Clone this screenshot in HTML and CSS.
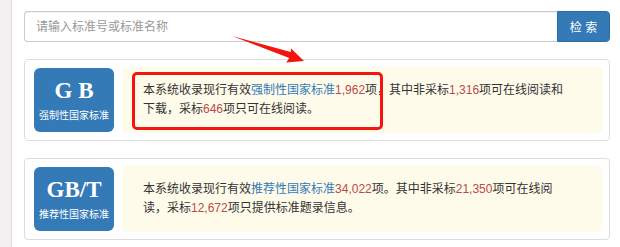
FILE: index.html
```html
<!DOCTYPE html>
<html lang="zh-CN">
<head>
  <meta charset="UTF-8" />
  <title>国家标准全文公开</title>
  <meta name="viewport" content="width=device-width, initial-scale=1.0" />
  <link rel="stylesheet" href="styles.css">
</head>
<body>
  <div class="page">
    <aside class="sidebar"></aside>

    <main class="main">
      <form class="search" onsubmit="return false">
        <input type="text" placeholder="请输入标准号或标准名称" />
        <button type="submit">检 索</button>
      </form>

      <div class="panel">
        <div class="badge">
          <span class="code">G B</span>
          <span class="label">强制性国家标准</span>
        </div>
        <div class="note">
          <p>本系统收录现行有效<span class="kind">强制性国家标准</span><span class="num">1,962</span>项，其中非采标<span class="num">1,316</span>项可在线阅读和<br>下载，采标<span class="num">646</span>项只可在线阅读。</p>
          <div class="mark"></div>
        </div>
      </div>

      <div class="panel">
        <div class="badge">
          <span class="code">GB/T</span>
          <span class="label">推荐性国家标准</span>
        </div>
        <div class="note">
          <p>本系统收录现行有效<span class="kind">推荐性国家标准</span><span class="num">34,022</span>项。其中非采标<span class="num">21,350</span>项可在线阅<br>读，采标<span class="num">12,672</span>项只提供标准题录信息。</p>
        </div>
      </div>
    </main>

    <!-- annotation arrow -->
    <svg class="arrow" width="620" height="247" viewBox="0 0 620 247">
      <polygon points="232,36 290.7,52.1 291.1,48.6 304,61 286.2,62.6 289.3,57.9" fill="#f5140e" />
    </svg>
  </div>
</body>
</html>
```

FILE: styles.css
```css
:root {
  --blue: #337ab7;
  --border: #ddd;
  --note-bg: #fffbea;
  --text: #333;
  --num: #b94a48;
}

body {
  margin: 0;
  font-family: "Liberation Sans", "Noto Sans CJK SC", sans-serif;
  font-size: 12px;
  color: var(--text);
  background: #fff;
}

.page {
  position: relative;
  display: flex;
  min-height: 247px;
}

.sidebar {
  width: 11px;
  flex-shrink: 0;
  background: #f2f1ef;
  border-right: 1px solid var(--border);
}

.main {
  flex: 1;
  padding: 11px 10px 0 12px;
}

.search {
  display: flex;
  height: 31px;
  margin: 0;
}

.search input {
  flex: 1;
  margin: 0;
  padding: 0 11px;
  font-family: inherit;
  font-size: 12px;
  color: var(--text);
  border: 1px solid #ccc;
  border-right: none;
  border-radius: 4px 0 0 4px;
  box-shadow: inset 0 1px 1px rgba(0, 0, 0, 0.06);
  outline: none;
}

.search input::placeholder {
  color: #999;
}

.search button {
  width: 53px;
  margin: 0;
  padding: 0;
  font-family: inherit;
  font-size: 12px;
  color: #fff;
  background: var(--blue);
  border: 1px solid #2e6da4;
  border-radius: 0 4px 4px 0;
  cursor: pointer;
}

.panel {
  display: flex;
  align-items: center;
  gap: 8px;
  margin-top: 17px;
  padding: 7px 7px 7px 8px;
  border: 1px solid var(--border);
  border-radius: 4px;
}

.badge {
  width: 80px;
  height: 64px;
  flex-shrink: 0;
  margin-left: 1px;
  display: flex;
  flex-direction: column;
  align-items: center;
  justify-content: center;
  background: var(--blue);
  color: #fff;
  border-radius: 6px;
}

.badge .code {
  font-family: "Liberation Serif", serif;
  font-weight: bold;
  font-size: 23px;
  line-height: 26px;
  white-space: pre;
}

.badge .label {
  margin-top: 6px;
  font-size: 10px;
  line-height: 12px;
}

.note {
  position: relative;
  flex: 1;
  height: 66px;
  display: flex;
  align-items: center;
  padding: 0 20px 0 21px;
  background: var(--note-bg);
  border-radius: 4px;
}

.note p {
  margin: 0;
  line-height: 19px;
  white-space: nowrap;
}

.kind {
  color: var(--blue);
}

.num {
  color: var(--num);
}

.mark {
  position: absolute;
  left: 10px;
  top: 5px;
  width: 251px;
  height: 58px;
  box-sizing: border-box;
  border: 3px solid #f5140e;
  border-radius: 5px;
}

.arrow {
  position: absolute;
  left: 0;
  top: 0;
  pointer-events: none;
}
```
